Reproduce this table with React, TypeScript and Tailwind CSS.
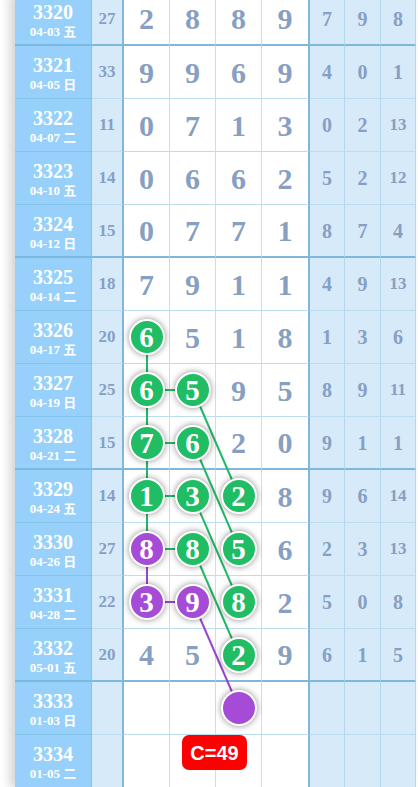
import React from "react";

type Row = { n: number; d: string; s?: number; g?: number[]; r?: number[] };

const rows: Row[] = [
  { n: 3320, d: "04-03 五", s: 27, g: [2, 8, 8, 9], r: [7, 9, 8] },
  { n: 3321, d: "04-05 日", s: 33, g: [9, 9, 6, 9], r: [4, 0, 1] },
  { n: 3322, d: "04-07 二", s: 11, g: [0, 7, 1, 3], r: [0, 2, 13] },
  { n: 3323, d: "04-10 五", s: 14, g: [0, 6, 6, 2], r: [5, 2, 12] },
  { n: 3324, d: "04-12 日", s: 15, g: [0, 7, 7, 1], r: [8, 7, 4] },
  { n: 3325, d: "04-14 二", s: 18, g: [7, 9, 1, 1], r: [4, 9, 13] },
  { n: 3326, d: "04-17 五", s: 20, g: [6, 5, 1, 8], r: [1, 3, 6] },
  { n: 3327, d: "04-19 日", s: 25, g: [6, 5, 9, 5], r: [8, 9, 11] },
  { n: 3328, d: "04-21 二", s: 15, g: [7, 6, 2, 0], r: [9, 1, 1] },
  { n: 3329, d: "04-24 五", s: 14, g: [1, 3, 2, 8], r: [9, 6, 14] },
  { n: 3330, d: "04-26 日", s: 27, g: [8, 8, 5, 6], r: [2, 3, 13] },
  { n: 3331, d: "04-28 二", s: 22, g: [3, 9, 8, 2], r: [5, 0, 8] },
  { n: 3332, d: "05-01 五", s: 20, g: [4, 5, 2, 9], r: [6, 1, 5] },
  { n: 3333, d: "01-03 日" },
  { n: 3334, d: "01-05 二" },
];

type Ball = { c: "g" | "p"; empty?: boolean };
const balls: Record<string, Ball> = {
  "6-0": { c: "g" },
  "7-0": { c: "g" },
  "7-1": { c: "g" },
  "8-0": { c: "g" },
  "8-1": { c: "g" },
  "9-0": { c: "g" },
  "9-1": { c: "g" },
  "9-2": { c: "g" },
  "10-0": { c: "p" },
  "10-1": { c: "g" },
  "10-2": { c: "g" },
  "11-0": { c: "p" },
  "11-1": { c: "p" },
  "11-2": { c: "g" },
  "12-2": { c: "g" },
  "13-2": { c: "p", empty: true },
};

const GREEN = "#22b866";
const PURPLE = "#9a47cc";

const lines: [number, number, number, number, string][] = [
  [6, 0, 7, 0, GREEN],
  [7, 0, 8, 0, GREEN],
  [8, 0, 9, 0, GREEN],
  [9, 0, 10, 0, GREEN],
  [10, 0, 11, 0, PURPLE],
  [7, 0, 7, 1, GREEN],
  [8, 0, 8, 1, GREEN],
  [9, 0, 9, 1, GREEN],
  [10, 0, 10, 1, GREEN],
  [11, 0, 11, 1, PURPLE],
  [7, 1, 9, 2, GREEN],
  [8, 1, 10, 2, GREEN],
  [9, 1, 11, 2, GREEN],
  [10, 1, 12, 2, GREEN],
  [11, 1, 13, 2, PURPLE],
];

const colX = [147, 193, 239, 286];
const rowY = (i: number) => -7 + 53 * i + 26;

const serif = { fontFamily: '"Liberation Serif", "Noto Sans CJK SC", serif' };

function BallView({ b, v }: { b: Ball; v?: number }) {
  return (
    <div
      className={
        "relative z-10 flex h-[36px] w-[36px] items-center justify-center rounded-full border-2 border-white text-[29px] font-bold leading-none text-white shadow-[0_0_6px_rgba(0,0,0,0.45)] " +
        (b.c === "g" ? "bg-[#20bd65]" : "bg-[#a64bd8]")
      }
    >
      {b.empty ? null : <span className="mt-[1px]">{v}</span>}
    </div>
  );
}

function RowView({ row, i }: { row: Row; i: number }) {
  const thick = i % 4 === 0;
  const bb = thick ? "border-b-2" : "border-b";
  const nameB = thick ? "border-b-[#7ab8df]" : "border-b-[#84c3ea]";
  const lightB = thick ? "border-b-[#7fb8dc]" : "border-b-[#bcdcef]";
  return (
    <div className="flex h-[53px]">
      <div
        className={`flex w-[77px] flex-col items-center border-r border-r-[#86c3e8] bg-[#97d1fb] pt-[8px] text-white ${bb} ${nameB}`}
      >
        <div className="text-[20px] font-bold leading-[22px]">{row.n}</div>
        <div className="text-[13px] font-bold leading-[17px]">{row.d}</div>
      </div>
      <div
        className={`flex w-[32px] items-center justify-center border-r-2 border-r-[#7fb6d9] bg-[#d7eafa] text-[17px] font-bold text-[#879fc2] ${bb} ${lightB}`}
      >
        {row.s}
      </div>
      {[0, 1, 2, 3].map((c) => {
        const b = balls[`${i}-${c}`];
        const v = row.g ? row.g[c] : undefined;
        return (
          <div
            key={c}
            className={`flex items-center justify-center bg-white text-[30px] font-bold text-[#879fc2] ${bb} ${lightB} ${
              c === 3 ? "w-[48px] border-r-2 border-r-[#7fb6d9]" : "w-[46px] border-r border-r-[#c4e1f1]"
            }`}
          >
            {b ? <BallView b={b} v={v} /> : v}
          </div>
        );
      })}
      {[0, 1, 2].map((c) => {
        const v = row.r ? row.r[c] : undefined;
        return (
          <div
            key={c}
            className={`flex items-center justify-center border-r border-r-[#b3d8ee] bg-[#d7eafa] font-bold text-[#879fc2] ${bb} ${lightB} ${
              c === 1 ? "w-[36px]" : "w-[35px]"
            } ${v !== undefined && v >= 10 ? "text-[17px]" : "text-[20px]"}`}
          >
            {v}
          </div>
        );
      })}
    </div>
  );
}

export default function App() {
  return (
    <div className="relative h-[787px] w-[418px] overflow-hidden bg-white" style={serif}>
      <div className="mt-[-7px] pl-[15px]">
        <div className="w-[401px] shadow-[-5px_0_10px_rgba(0,0,0,0.18)]">
          {rows.map((row, i) => (
            <RowView key={row.n} row={row} i={i} />
          ))}
        </div>
      </div>
      <svg className="pointer-events-none absolute left-0 top-0 z-[5]" width={418} height={787}>
        {lines.map(([r1, c1, r2, c2, col], k) => (
          <line
            key={k}
            x1={colX[c1]}
            y1={rowY(r1)}
            x2={colX[c2]}
            y2={rowY(r2)}
            stroke={col}
            strokeWidth={2}
          />
        ))}
      </svg>
      <div
        className="absolute left-[182px] top-[735px] z-20 flex h-[35px] w-[65px] items-center justify-center rounded-[7px] bg-[#ff0000] text-[20px] font-bold text-white"
        style={{ fontFamily: '"Liberation Sans", Arial, sans-serif' }}
      >
        C=49
      </div>
    </div>
  );
}
